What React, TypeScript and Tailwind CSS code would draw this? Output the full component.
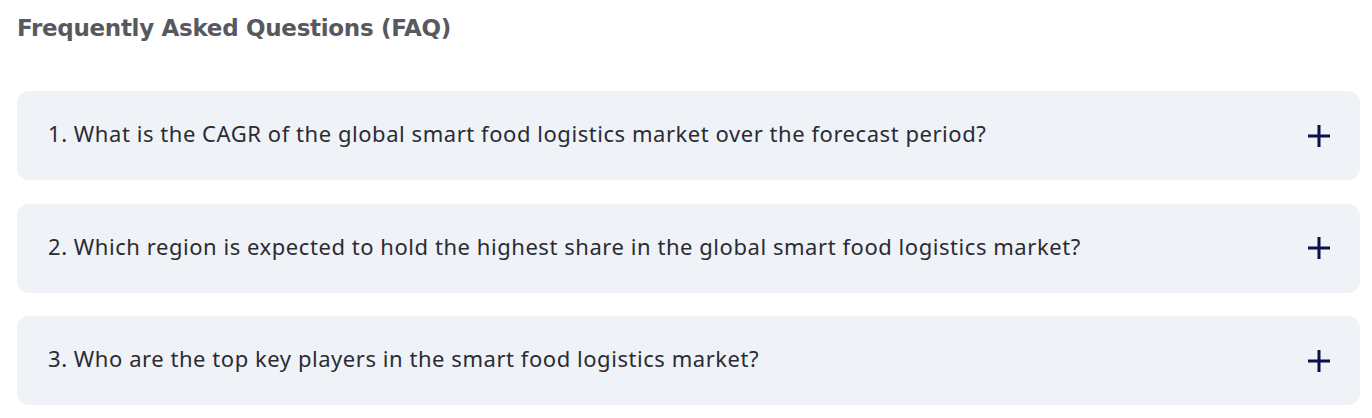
const faqs = [
  "1. What is the CAGR of the global smart food logistics market over the forecast period?",
  "2. Which region is expected to hold the highest share in the global smart food logistics market?",
  "3. Who are the top key players in the smart food logistics market?",
];

function PlusIcon() {
  return (
    <svg width="22" height="22" viewBox="0 0 22 22" className="shrink-0">
      <path d="M11 0v22M0 11h22" stroke="#0a0f4d" strokeWidth="3" />
    </svg>
  );
}

export default function App() {
  return (
    <div className="min-h-[418px] bg-white px-[17px] pt-[13px] pr-3">
      <h2 className="font-['DejaVu_Sans',sans-serif] text-[23px] font-bold leading-[30px] tracking-[-0.3px] text-[#58585f]">
        Frequently Asked Questions (FAQ)
      </h2>
      <div className="mt-[48px] flex flex-col gap-[23.5px]">
        {faqs.map((q) => (
          <div
            key={q}
            className="flex h-[89px] items-center justify-between rounded-xl bg-[#eff2f7] pl-[31px] pr-[30px]"
          >
            <p className="pb-[4px] font-['Noto_Sans',sans-serif] text-[22px] tracking-[0.55px] text-[#2b2b33]">
              {q}
            </p>
            <PlusIcon />
          </div>
        ))}
      </div>
    </div>
  );
}
